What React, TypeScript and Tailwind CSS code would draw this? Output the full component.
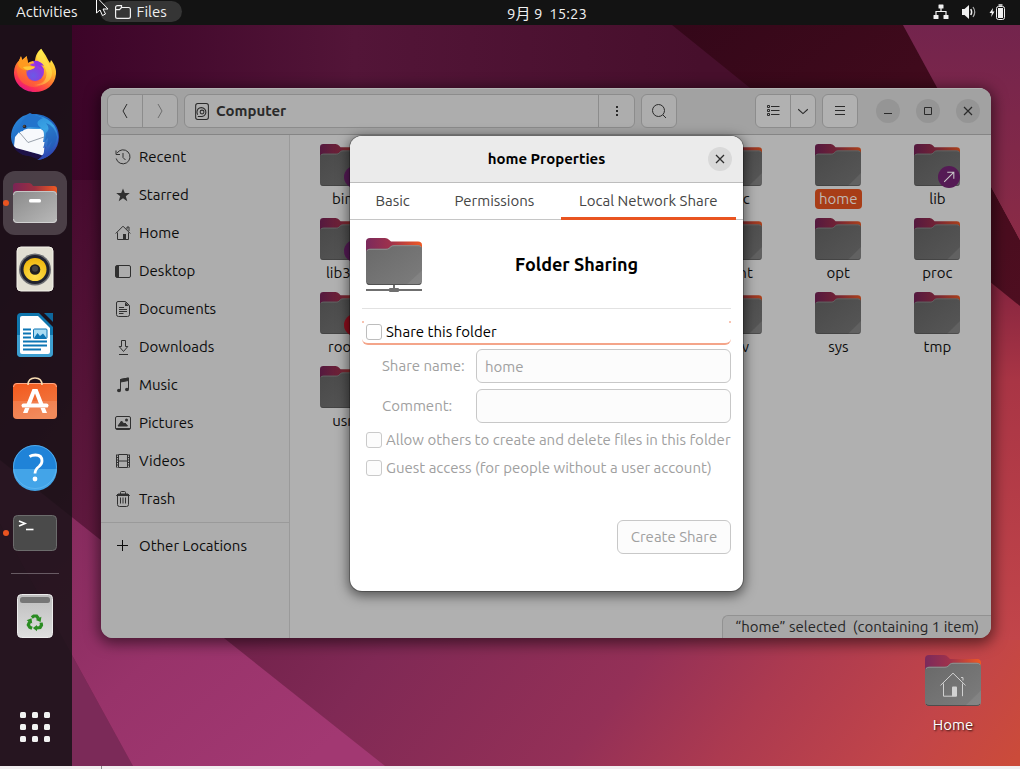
import type { ReactNode } from "react";

type IconProps = { children: ReactNode; className?: string };

function Symbolic({ children, className = "size-4" }: IconProps) {
  return (
    <svg viewBox="0 0 16 16" className={className} fill="none" stroke="currentColor" aria-hidden="true">
      {children}
    </svg>
  );
}

function Wallpaper() {
  return (
    <svg
      className="absolute inset-0 h-full w-full"
      viewBox="0 0 1020 766"
      preserveAspectRatio="none"
      aria-hidden="true"
    >
      <defs>
        <linearGradient id="wp-base" gradientUnits="userSpaceOnUse" x1="60" y1="60" x2="1000" y2="780">
          <stop offset="0" stopColor="#3c0428" />
          <stop offset="0.2" stopColor="#581539" />
          <stop offset="0.52" stopColor="#802955" />
          <stop offset="0.7" stopColor="#943057" />
          <stop offset="0.8" stopColor="#ac3a50" />
          <stop offset="0.92" stopColor="#c24549" />
          <stop offset="1" stopColor="#cb4b3a" />
        </linearGradient>
        <linearGradient id="wp-top" gradientUnits="userSpaceOnUse" x1="72" y1="0" x2="700" y2="0">
          <stop offset="0" stopColor="#3c0428" />
          <stop offset="0.45" stopColor="#531538" />
          <stop offset="1" stopColor="#470f2c" />
        </linearGradient>
        <linearGradient id="wp-ray" gradientUnits="userSpaceOnUse" x1="60" y1="500" x2="300" y2="769">
          <stop offset="0" stopColor="#842a5c" />
          <stop offset="0.5" stopColor="#98336a" />
          <stop offset="1" stopColor="#a23872" />
        </linearGradient>
        <linearGradient id="wp-light" x1="0" y1="0" x2="0" y2="1">
          <stop offset="0" stopColor="#73244d" />
          <stop offset="1" stopColor="#8a2b46" />
        </linearGradient>
        <linearGradient id="wp-dark" x1="0" y1="0" x2="1" y2="1">
          <stop offset="0" stopColor="#340719" />
          <stop offset="1" stopColor="#4e0e20" />
        </linearGradient>
        <linearGradient id="wp-right" x1="0" y1="0" x2="0" y2="1">
          <stop offset="0" stopColor="#82233f" />
          <stop offset="0.3" stopColor="#a93545" />
          <stop offset="1" stopColor="#c2454a" />
        </linearGradient>
      </defs>
      <rect width="1020" height="766" fill="url(#wp-base)" />
      <path d="M72 0H1020V180H72Z" fill="url(#wp-top)" />
      <path d="M980 270L1020 302V640H980Z" fill="url(#wp-right)" />
      <path d="M672 25H903L1020 240V306Z" fill="url(#wp-dark)" />
      <path d="M903 25H1020V240Z" fill="url(#wp-light)" />
      <path d="M0 524L133 766H0Z" fill="#7b2a58" />
      <path d="M0 460L385 766H133L0 524Z" fill="url(#wp-ray)" />
    </svg>
  );
}

function Folder({
  id,
  dim = false,
  className,
  children,
}: {
  id: string;
  dim?: boolean;
  className: string;
  children?: ReactNode;
}) {
  return (
    <svg viewBox="0 0 56 52" preserveAspectRatio="none" className={className} aria-hidden="true">
      <defs>
        <linearGradient id={`${id}-back`} x1="0" y1="0" x2="1" y2="0">
          <stop offset="0" stopColor={dim ? "#54193f" : "#7a2a5c"} />
          <stop offset="0.45" stopColor={dim ? "#702236" : "#a0324b"} />
          <stop offset="1" stopColor={dim ? "#ab411b" : "#f05a24"} />
        </linearGradient>
        <linearGradient id={`${id}-front`} x1="0" y1="0" x2="1" y2="1">
          <stop offset="0" stopColor={dim ? "#494949" : "#696969"} />
          <stop offset="1" stopColor={dim ? "#575757" : "#7d7d7d"} />
        </linearGradient>
      </defs>
      <path
        d="M0 16V4Q0 0 4 0H19Q21.500 0 23 2L25 4H52Q56 4 56 8V20H0Z"
        fill={`url(#${id}-back)`}
      />
      <path
        d="M0 16Q0 12 4 12H20Q22 12 23 11L25 9Q26 8 28 8H52Q56 8 56 12V48Q56 52 52 52H4Q0 52 0 48Z"
        fill={`url(#${id}-front)`}
      />
      <path
        d="M1 14Q2 12.500 4 12.500H20Q22 12.500 23 11.500L25 9.500Q26 8.500 28 8.500H52Q54 8.500 55 10"
        fill="none"
        stroke={dim ? "#686868" : "#909090"}
        strokeWidth="1"
      />
      <path d="M56 36V48Q56 52 52 52H40Z" fill="#fff" opacity="0.07" />
      <path d="M1 50Q2 51.500 4 51.500H52Q54 51.500 55 50" fill="none" stroke="#333" strokeOpacity="0.6" />
      {children}
    </svg>
  );
}

function FirefoxIcon() {
  return (
    <svg viewBox="0 0 48 48" className="size-12" aria-hidden="true">
      <defs>
        <linearGradient id="ff-body" x1="0.8" y1="0.1" x2="0.3" y2="1">
          <stop offset="0" stopColor="#fff04a" />
          <stop offset="0.35" stopColor="#ffb52c" />
          <stop offset="0.6" stopColor="#ff6b32" />
          <stop offset="0.85" stopColor="#fb2f55" />
          <stop offset="1" stopColor="#e2158a" />
        </linearGradient>
        <radialGradient id="ff-globe" cx="0.4" cy="0.7" r="0.8">
          <stop offset="0" stopColor="#6a5ae6" />
          <stop offset="0.6" stopColor="#8a3fdf" />
          <stop offset="1" stopColor="#c02be0" />
        </radialGradient>
        <linearGradient id="ff-head" x1="0" y1="0" x2="0.6" y2="1">
          <stop offset="0" stopColor="#ff8a1f" />
          <stop offset="1" stopColor="#ff7a2b" />
        </linearGradient>
      </defs>
      <path
        d="M30.300 1.700C32 5 34.500 7.500 36 11C37 13 38 14.500 39 16L40 13C44 18 45.500 23 45 27C44 38 35 45 24 45C12 45 3 36.500 3 25.500C3 20 5 16 8 13.500L10 9L11 13L15.700 9L17 16C19 14.500 21 14 24 14C24.500 9 26 5 30.300 1.700Z"
        fill="url(#ff-body)"
      />
      <path d="M30 2C26 6 25 11 27 14C31 17 35 20 35.500 26C36 33 30 38 23 38C31 40 41 35 41 26C41 18 32 12 30 2Z" fill="#fff15a" opacity="0.45" />
      <circle cx="24" cy="25" r="9" fill="url(#ff-globe)" />
      <path d="M22 14C26 13 31 15 33 19L30 18C32 20 33 22 33 24C31 21 28 19 25 19Z" fill="#8e34e4" />
      <path
        d="M8 14L10 11L11.500 14L17 16.500C19 19 22 19 24 19.700C23 22 20 22.500 18 23C16 24 15.500 26 16 28C16.500 32 20 35 25 35C30 35 34 31.500 35 28C35 36 28 41 22 40C13 39 7 33 6 25C5.500 21 6.500 17 8 14Z"
        fill="url(#ff-head)"
        opacity="0.45"
      />
      <path d="M7 16L10 9.500L11.500 13.500L15.700 9.500L17 16.500C19 19 22 19 24 19.700C23 22 20 22.500 18 23C12 24 7 21 7 16Z" fill="#ff9a20" />
      <path d="M12 20C16 19 20 19 24 19.700C23 22 19 22.500 17 23C15 23 13 22 12 20Z" fill="#ffc83a" />
    </svg>
  );
}

function ThunderbirdIcon() {
  return (
    <svg viewBox="0 0 48 48" className="size-12" aria-hidden="true">
      <defs>
        <linearGradient id="tb-body" x1="0" y1="0" x2="1" y2="1">
          <stop offset="0" stopColor="#2f8fe0" />
          <stop offset="0.45" stopColor="#1c62bd" />
          <stop offset="1" stopColor="#3a35a5" />
        </linearGradient>
        <linearGradient id="tb-wing" x1="0" y1="0" x2="0.4" y2="1">
          <stop offset="0" stopColor="#2a86d8" />
          <stop offset="0.5" stopColor="#3aa4e4" />
          <stop offset="1" stopColor="#2d4cb5" />
        </linearGradient>
      </defs>
      <path
        d="M15 2L19 0L21 1C35 0 48 9 48 24C48 36 39 45 27 47L32 43L13 42C5 38 0 31 0 24C0 15 5 7 12 3Z"
        fill="url(#tb-body)"
      />
      <path d="M2 33L33 43L26 46Q20 43 12 42Q5 39 2 33Z" fill="#1d1147" />
      <path d="M3 33L4 24L9 18L17 15.500L30 16Q34 18 34 22L33 41Q31 43 29 41.500L5 35Z" fill="#f7f9fc" />
      <path d="M9 20L17 29.500L33 24" fill="none" stroke="#8f97a3" strokeWidth="0.900" />
      <path
        d="M20 2C34 2 46 10 47 23C48 35 39 46 26 47C31 44 33 41 33 38L35 34L32 35L34 29L32 29L33 23Q33 16 30 16L13 15Q10 17 8 21C8 14 14 4 20 2Z"
        fill="url(#tb-wing)"
      />
      <path d="M20 1C13 3 8 12 8 20Q9 18 12 18Q14 14 19 14L30 15Q22 9 32 5Q25 2 20 1Z" fill="#2374cc" />
      <path d="M35 20L34 28L37 25L36 34L41 28L37 39Q45 33 46 24Q44 13 35 10Q40 16 35 20Z" fill="#1f5fb8" opacity="0.65" />
      <circle cx="13.500" cy="13.500" r="1.800" fill="#232130" />
      <circle cx="13" cy="13" r="0.600" fill="#f4bf4b" />
    </svg>
  );
}

function FilesIcon() {
  return (
    <svg viewBox="0 0 48 48" className="size-12" aria-hidden="true">
      <defs>
        <linearGradient id="fi-back" x1="0" y1="0" x2="1" y2="0">
          <stop offset="0" stopColor="#7a2455" />
          <stop offset="0.5" stopColor="#9c3040" />
          <stop offset="1" stopColor="#f05a22" />
        </linearGradient>
        <linearGradient id="fi-front" x1="0" y1="0" x2="1" y2="1">
          <stop offset="0" stopColor="#8a8a8a" />
          <stop offset="1" stopColor="#b9b9b9" />
        </linearGradient>
      </defs>
      <path d="M2 16V7Q2 4 5 4H18Q20 4 21 5.500L22 7H43Q46 7 46 10V16Z" fill="url(#fi-back)" />
      <rect x="2" y="12" width="44" height="32" rx="4" fill="url(#fi-front)" />
      <path d="M2.500 16Q2.500 12.500 6 12.500H42Q45.500 12.500 45.500 16" fill="none" stroke="#c6c6c6" />
      <path d="M2.500 40Q2.500 43.500 6 43.500H42Q45.500 43.500 45.500 40" fill="none" stroke="#d2d2d2" />
      <rect x="18" y="20" width="12" height="3.500" rx="1.500" fill="#fff" />
    </svg>
  );
}

function RhythmboxIcon() {
  return (
    <svg viewBox="0 0 48 48" className="size-12" aria-hidden="true">
      <defs>
        <radialGradient id="rb-cone" cx="0.5" cy="0.8" r="0.8">
          <stop offset="0" stopColor="#ffe14f" />
          <stop offset="1" stopColor="#eeb50b" />
        </radialGradient>
      </defs>
      <rect x="6" y="2" width="36" height="44" rx="4" fill="#e2dfd3" stroke="#f4f2ea" />
      <circle cx="24" cy="24.500" r="16" fill="#6d6e72" />
      <circle cx="24" cy="24.500" r="14.500" fill="#20222f" />
      <circle cx="24" cy="24.500" r="11.500" fill="url(#rb-cone)" />
      <circle cx="24" cy="24.500" r="5.300" fill="#202020" />
      <circle cx="24" cy="23.800" r="3" fill="#444" />
    </svg>
  );
}

function WriterIcon() {
  return (
    <svg viewBox="0 0 48 48" className="size-12" aria-hidden="true">
      <path d="M10 2H28L42 16V42Q42 46 38 46H10Q6 46 6 42V6Q6 2 10 2Z" fill="#0f76ad" />
      <path d="M6 24H42V42Q42 46 38 46H10Q6 46 6 42Z" fill="#3d9fd0" />
      <path d="M33 2H42V11Z" fill="#0e679c" />
      <path d="M11 5H27L39 17V41Q39 43 37 43H11Q9 43 9 41V7Q9 5 11 5Z" fill="#fff" />
      <path d="M12 18.500H20M12 22.500H20M12 26.500H20M12 30.500H36M12 34.500H36M12 38.500H30" stroke="#0c75b4" strokeWidth="2" />
      <rect x="22.500" y="18" width="13.500" height="9.500" rx="1" fill="#aadcf3" stroke="#0c75b4" />
      <path d="M23 27L26.500 22L29 25L32 22.500L35.500 27Z" fill="#0c75b4" />
    </svg>
  );
}

function SoftwareIcon() {
  return (
    <svg viewBox="0 0 48 48" className="size-12" aria-hidden="true">
      <defs>
        <linearGradient id="sw-bag" x1="0" y1="0" x2="0.4" y2="1">
          <stop offset="0" stopColor="#f4591c" />
          <stop offset="1" stopColor="#ef7a45" />
        </linearGradient>
      </defs>
      <rect x="2" y="6" width="44" height="36" rx="4" fill="url(#sw-bag)" />
      <path d="M2 24H46V38Q46 42 42 42H6Q2 42 2 38Z" fill="#fff" opacity="0.12" />
      <path d="M2.500 10Q2.500 6.500 6 6.500H42Q45.500 6.500 45.500 10" fill="none" stroke="#ffa884" />
      <path d="M17 8Q17 1 24 1Q31 1 31 8" fill="none" stroke="#f8ddb2" strokeWidth="1.600" />
      <path d="M21.500 12H26.500L36 36H31.500L24 16.500L16.500 36H12Z" fill="#fff" />
      <path d="M12.500 28.500H35.500" stroke="#fff" strokeWidth="4" strokeLinecap="round" />
      <path d="M11 30.500H37" stroke="#f7bda1" strokeWidth="0.800" />
    </svg>
  );
}

function HelpIcon() {
  return (
    <svg viewBox="0 0 48 48" className="size-12" aria-hidden="true">
      <circle cx="24" cy="24" r="22" fill="#1f83d8" />
      <path d="M2 26H46A22 22 0 0 1 2 26Z" fill="#43a4e8" />
      <circle cx="24" cy="24" r="21.500" fill="none" stroke="#65bbf2" strokeOpacity="0.7" />
      <path
        d="M18.500 13.500Q21 12 24.500 12Q31 12 31 18Q31 21 28 23.500Q24 26.500 24 30.500"
        fill="none"
        stroke="#fff"
        strokeWidth="2.800"
      />
      <circle cx="24" cy="36" r="2.400" fill="#fff" />
    </svg>
  );
}

function TerminalIcon() {
  return (
    <svg viewBox="0 0 48 48" className="size-12" aria-hidden="true">
      <rect x="2.500" y="6.500" width="43" height="35" rx="4" fill="#4a4a4a" stroke="#6c6c6c" />
      <path d="M8 12L14 14.500L8 17" fill="none" stroke="#fff" strokeWidth="1.600" />
      <path d="M15 20.500H22.500" stroke="#fff" strokeWidth="1.600" />
    </svg>
  );
}

function TrashBinIcon() {
  const arrow = (
    <>
      <path d="M20 21.500L22.500 19.500H26L28.500 23" fill="none" stroke="#2a8c22" strokeWidth="4" />
      <path d="M32 20.500L31 27L25 24.500Z" fill="#2a8c22" />
    </>
  );
  return (
    <svg viewBox="0 0 48 48" className="size-12" aria-hidden="true">
      <defs>
        <linearGradient id="tr-bin" x1="0" y1="0" x2="0" y2="1">
          <stop offset="0" stopColor="#bdbdbd" />
          <stop offset="1" stopColor="#dedede" />
        </linearGradient>
      </defs>
      <rect x="6.500" y="2.500" width="35" height="43" rx="4" fill="url(#tr-bin)" stroke="#ececec" />
      <rect x="9" y="5" width="30" height="6" rx="2.500" fill="#767676" />
      <g transform="translate(4.800 8.400) scale(0.800)">
        <g>{arrow}</g>
        <g transform="rotate(120 24 28)">{arrow}</g>
        <g transform="rotate(240 24 28)">{arrow}</g>
      </g>
    </svg>
  );
}

function AppsGridIcon() {
  return (
    <svg viewBox="0 0 48 48" className="size-12" fill="#f2f2f2" aria-hidden="true">
      {[9, 21, 33].map((y) =>
        [9, 21, 33].map((x) => <rect key={`${x}-${y}`} x={x} y={y} width="6" height="6" rx="1.500" />)
      )}
    </svg>
  );
}

function TopBar() {
  return (
    <header className="relative z-10 grid h-[25px] grid-cols-[1fr_auto_1fr] items-center bg-[#131313] text-[15px] leading-5 text-[#f0f0f0]">
      <div className="flex items-center gap-[22px] pb-0.5 pl-4">
        <button type="button">Activities</button>
        <button type="button" className="flex h-[21px] items-center gap-1.5 rounded-full bg-[#353535] px-[15px]">
          <svg viewBox="0 0 16 16" className="size-4" fill="none" stroke="currentColor" strokeWidth="1.200" aria-hidden="true">
            <path d="M0.600 12.500V3.500Q0.600 1.600 2.500 1.600H6.500V3.500H13.500Q15.400 3.500 15.400 5.400V12.500Q15.400 14.400 13.500 14.400H2.500Q0.600 14.400 0.600 12.500ZM0.600 5.600H4.500L6.500 3.500" />
          </svg>
          Files
        </button>
      </div>
      <time className="ml-[74px] pt-0.5 whitespace-pre">9月 9  15:23</time>
      <div className="flex items-center justify-end gap-3 pr-[15px] pb-0.5">
        <Symbolic>
          <rect x="5.500" y="0.500" width="5" height="4" rx="0.500" fill="currentColor" stroke="none" />
          <rect x="0.500" y="11" width="5" height="4" rx="0.500" fill="currentColor" stroke="none" />
          <rect x="10.500" y="11" width="5" height="4" rx="0.500" fill="currentColor" stroke="none" />
          <path d="M8 4V7.500M3 11V7.500H13V11" strokeWidth="1.200" />
        </Symbolic>
        <Symbolic>
          <path d="M1 5H3.500L8 1V15L3.500 11H1Z" fill="currentColor" stroke="none" />
          <path d="M9.800 5Q11.500 8 9.800 11" strokeWidth="1.500" />
          <path d="M12 3Q15.500 8 12 13" strokeWidth="1.200" opacity="0.7" />
        </Symbolic>
        <Symbolic>
          <path d="M4 4L0.500 9H2.800L2.200 13L5.500 7.500H3.500Z" fill="currentColor" stroke="none" />
          <rect x="7.500" y="2.500" width="8" height="13" rx="2" />
          <rect x="9" y="4" width="5" height="10" fill="currentColor" stroke="none" />
          <path d="M9.500 1H13.500" strokeWidth="1.500" />
        </Symbolic>
      </div>
      <svg viewBox="0 0 13 18" className="absolute -top-px left-24 h-[18px] w-[13px]" aria-hidden="true">
        <path d="M0.500 -1V14L4 11L6.500 16.500L9.500 15L7 10H12L1.500 -1Z" fill="#1a1a1a" stroke="#fff" />
      </svg>
    </header>
  );
}

function DockItem({
  label,
  running = false,
  active = false,
  children,
}: {
  label: string;
  running?: boolean;
  active?: boolean;
  children: ReactNode;
}) {
  return (
    <button
      type="button"
      aria-label={label}
      className={`relative flex size-16 shrink-0 items-center justify-center rounded-xl ${active ? "bg-white/20" : ""}`}
    >
      {running && <span className="absolute top-[29px] left-0 size-1.5 rounded-full bg-[#e95420]" />}
      {children}
    </button>
  );
}

function Dock() {
  return (
    <nav aria-label="Dock" className="flex w-[72px] shrink-0 flex-col gap-0.5 bg-[#171216]/85 pt-3.5 pb-[7px] pl-[3px]">
      <DockItem label="Firefox"><FirefoxIcon /></DockItem>
      <DockItem label="Thunderbird"><ThunderbirdIcon /></DockItem>
      <DockItem label="Files" running active><FilesIcon /></DockItem>
      <DockItem label="Rhythmbox"><RhythmboxIcon /></DockItem>
      <DockItem label="LibreOffice Writer"><WriterIcon /></DockItem>
      <DockItem label="Software"><SoftwareIcon /></DockItem>
      <DockItem label="Help"><HelpIcon /></DockItem>
      <DockItem label="Terminal" running><TerminalIcon /></DockItem>
      <div className="mt-1.5 mr-[13px] mb-2 ml-2 border-t border-white/30" />
      <DockItem label="Trash"><TrashBinIcon /></DockItem>
      <div className="mt-auto">
        <DockItem label="Show Applications"><AppsGridIcon /></DockItem>
      </div>
    </nav>
  );
}

const places: { name: string; icon: ReactNode }[] = [
  {
    name: "Recent",
    icon: (
      <Symbolic>
        <path d="M2 4.200A7 7 0 1 1 1.200 9.500M8 4V8.500L10.500 11" />
        <path d="M1 1.500V5.500H5" />
      </Symbolic>
    ),
  },
  {
    name: "Starred",
    icon: (
      <Symbolic>
        <path d="M8 1.500L9.800 6H14.800L10.800 9.200L12.300 14.200L8 11.200L3.700 14.200L5.200 9.200L1.200 6H6.200Z" fill="currentColor" stroke="none" />
      </Symbolic>
    ),
  },
  {
    name: "Home",
    icon: (
      <Symbolic>
        <path d="M0.700 8.500L8 1.200L15.300 8.500M2.500 7.500V14.500H13.500V7.500M12 4.500V2H14V6" />
        <rect x="8" y="9" width="3" height="5.500" fill="currentColor" stroke="none" />
      </Symbolic>
    ),
  },
  {
    name: "Desktop",
    icon: (
      <Symbolic>
        <rect x="0.500" y="2.500" width="15" height="12" rx="1.500" />
        <path d="M1 3H4V14H1Z" fill="currentColor" stroke="none" />
      </Symbolic>
    ),
  },
  {
    name: "Documents",
    icon: (
      <Symbolic>
        <path d="M3 0.500H10.500L14.500 4.500V13.500Q14.500 15.500 12.500 15.500H3.500Q1.500 15.500 1.500 13.500V2Q1.500 0.500 3 0.500Z" />
        <path d="M10 1V5H14Z" fill="currentColor" stroke="none" />
        <path d="M4 6.500H9M4 8.500H12M4 10.500H12M4 12.500H8.500" />
      </Symbolic>
    ),
  },
  {
    name: "Downloads",
    icon: (
      <Symbolic>
        <path d="M6.500 1.500H10.500V7.500H12.800L8.500 12.500L4.200 7.500H6.500ZM4 15.500H13" />
      </Symbolic>
    ),
  },
  {
    name: "Music",
    icon: (
      <Symbolic>
        <path d="M5.500 13V2.500L13.500 1V12" />
        <path d="M5.500 2.500L13.500 1V3.500L5.500 5Z" fill="currentColor" />
        <ellipse cx="4" cy="13.500" rx="2" ry="1.800" fill="currentColor" stroke="none" />
        <ellipse cx="12" cy="12.500" rx="2" ry="1.800" fill="currentColor" stroke="none" />
      </Symbolic>
    ),
  },
  {
    name: "Pictures",
    icon: (
      <Symbolic>
        <rect x="0.500" y="1.500" width="15" height="13" rx="1.500" />
        <path d="M1 13.500H15M3 11L6.500 6L9 9L10 8L12.500 11Z" fill="currentColor" />
        <circle cx="11.500" cy="5" r="1.500" fill="currentColor" stroke="none" />
      </Symbolic>
    ),
  },
  {
    name: "Videos",
    icon: (
      <Symbolic>
        <path d="M3.500 1.500H12.500V14.500H3.500ZM3.500 8H12.500" />
        <path d="M1.500 1.500V14.500M14.500 1.500V14.500" />
        <path d="M2.500 1.500V14.500M13.500 1.500V14.500" strokeDasharray="1 1.500" />
      </Symbolic>
    ),
  },
  {
    name: "Trash",
    icon: (
      <Symbolic>
        <path d="M1.500 4.500H14.500L13 3H3Z" fill="currentColor" />
        <path d="M5.500 3V1.500Q5.500 0.500 6.500 0.500H9.500Q10.500 0.500 10.500 1.500V3M2.500 5V13.500Q2.500 15.500 4.500 15.500H11.500Q13.500 15.500 13.500 13.500V5M5.500 6.500V12.500M8 6.500V12.500M10.500 6.500V12.500" />
      </Symbolic>
    ),
  },
];

function Sidebar() {
  return (
    <aside className="w-[189px] shrink-0 border-r border-[#9a9a9a] bg-[#adadad] pt-[3px]">
      <ul>
        {places.map((place) => (
          <li key={place.name}>
            <a href={`#${place.name.toLowerCase()}`} className="flex h-[38px] items-center gap-2 pl-3.5">
              <span className="text-[#303030]">{place.icon}</span>
              {place.name}
            </a>
          </li>
        ))}
      </ul>
      <div className="mt-1 border-t border-[#9a9a9a] pt-1">
        <a href="#other-locations" className="flex h-[38px] items-center gap-2 pl-3.5">
          <Symbolic>
            <path d="M7.500 2V13M2 7.500H13" />
          </Symbolic>
          Other Locations
        </a>
      </div>
    </aside>
  );
}

type Entry = { name: string; cell: string; emblem?: "link" | "denied"; selected?: boolean };

const entries: Entry[] = [
  { name: "bin", cell: "col-start-1 row-start-1", emblem: "link" },
  { name: "etc", cell: "col-start-5 row-start-1" },
  { name: "home", cell: "col-start-6 row-start-1", selected: true },
  { name: "lib", cell: "col-start-7 row-start-1", emblem: "link" },
  { name: "lib32", cell: "col-start-1 row-start-2", emblem: "link" },
  { name: "mnt", cell: "col-start-5 row-start-2" },
  { name: "opt", cell: "col-start-6 row-start-2" },
  { name: "proc", cell: "col-start-7 row-start-2" },
  { name: "root", cell: "col-start-1 row-start-3", emblem: "denied" },
  { name: "srv", cell: "col-start-5 row-start-3" },
  { name: "sys", cell: "col-start-6 row-start-3" },
  { name: "tmp", cell: "col-start-7 row-start-3" },
  { name: "usr", cell: "col-start-1 row-start-4" },
];

function FolderEntry({ entry }: { entry: Entry }) {
  return (
    <button type="button" className={`flex flex-col items-center gap-[3px] ${entry.cell}`}>
      <span className="relative">
        <Folder id={`dir-${entry.name}`} dim className="h-[42px] w-[46px]" />
        {entry.emblem && (
          <span
            className={`absolute right-0 -bottom-0.5 flex size-[22px] items-center justify-center rounded-full text-[#c8c8c8] ${
              entry.emblem === "link" ? "bg-[#551a55]" : "bg-[#8c0d1c]"
            }`}
          >
            <Symbolic className="size-3.5">
              {entry.emblem === "link" ? (
                <path d="M2.500 13.500L13 3M6 2.500H13.500V10" strokeWidth="1.200" />
              ) : (
                <path d="M3 3L13 13M13 3L3 13" strokeWidth="1.500" />
              )}
            </Symbolic>
          </span>
        )}
      </span>
      <span
        className={`h-5 rounded px-1 leading-5 ${entry.selected ? "bg-[#a83d17] text-[#c0b8b4]" : ""}`}
      >
        {entry.name}
      </span>
    </button>
  );
}

function WindowButton({ label, children }: { label: string; children: ReactNode }) {
  return (
    <button type="button" aria-label={label} className="flex size-6 items-center justify-center rounded-full bg-[#959595]">
      <Symbolic>{children}</Symbolic>
    </button>
  );
}

function FilesWindow() {
  return (
    <section
      aria-label="Files"
      className="absolute inset-x-[29px] top-[63px] flex h-[550px] flex-col overflow-hidden rounded-xl bg-[#b0b0b0] text-[15px] leading-5 text-[#0c0c0c] shadow-[0_3px_14px_3px_rgba(0,0,0,0.5)]"
    >
      <div className="flex h-[47px] shrink-0 items-center border-b border-[#858585] bg-[#a2a2a2] px-1.5 text-[#2a2a2a] shadow-[inset_0_1px_0_#b3b3b3]">
        <div className="flex h-[34px] w-[71px] divide-x divide-[#8c8c8c] rounded-md border border-[#8c8c8c] bg-[#adadad]">
          <button type="button" aria-label="Back" className="flex flex-1 items-center justify-center">
            <Symbolic><path d="M10 1L6 8L10 15" /></Symbolic>
          </button>
          <button type="button" aria-label="Forward" className="flex flex-1 items-center justify-center text-[#6d6d6d]">
            <Symbolic><path d="M6 1L10 8L6 15" /></Symbolic>
          </button>
        </div>
        <div className="ml-1.5 flex h-[34px] min-w-0 flex-[0_1_451px] divide-x divide-[#8c8c8c] rounded-md border border-[#8c8c8c] bg-[#adadad]">
          <button type="button" className="flex flex-1 items-center gap-1.5 pl-2 font-bold">
            <Symbolic className="size-[17px]">
              <rect x="2.500" y="0.500" width="12" height="15" rx="2" />
              <path d="M4.500 11A4.200 4.200 0 1 1 8.500 12.700H4.500" />
              <circle cx="8.500" cy="8.500" r="1.800" />
            </Symbolic>
            Computer
          </button>
          <button type="button" aria-label="Location menu" className="flex w-[35px] items-center justify-center">
            <Symbolic><path d="M8 3V5M8 7V9M8 11V13" strokeWidth="2" /></Symbolic>
          </button>
        </div>
        <button type="button" aria-label="Search" className="ml-1.5 flex h-[34px] w-9 items-center justify-center rounded-md border border-[#8c8c8c] bg-[#adadad]">
          <Symbolic><circle cx="7.500" cy="7.500" r="6" /><path d="M12 12L15 15" /></Symbolic>
        </button>
        <div className="ml-auto flex h-[34px] w-[61px] divide-x divide-[#8c8c8c] rounded-md border border-[#8c8c8c] bg-[#b1b1b1]">
          <button type="button" aria-label="List view" className="flex w-[35px] items-center justify-center">
            <Symbolic>
              <path d="M6 3.500H14.500M6 7.500H14.500M6 11.500H14.500" />
              <path d="M2.500 2.500H4.500V4.500H2.500ZM2.500 6.500H4.500V8.500H2.500ZM2.500 10.500H4.500V12.500H2.500Z" />
            </Symbolic>
          </button>
          <button type="button" aria-label="View options" className="flex flex-1 items-center justify-center">
            <Symbolic className="size-3.5"><path d="M2.500 6L8 11L13.500 6" strokeWidth="1.200" /></Symbolic>
          </button>
        </div>
        <button type="button" aria-label="Menu" className="ml-1.5 flex h-[34px] w-9 items-center justify-center rounded-md border border-[#8c8c8c] bg-[#b1b1b1]">
          <Symbolic><path d="M3 3.500H13M3 7.500H13M3 11.500H13" /></Symbolic>
        </button>
        <div className="ml-[18px] flex gap-4 pr-[5px]">
          <WindowButton label="Minimize"><path d="M4 10.500H12" /></WindowButton>
          <WindowButton label="Maximize"><path d="M4.500 4.500H11.500V11.500H4.500Z" /></WindowButton>
          <WindowButton label="Close"><path d="M4 4L12 12M12 4L4 12" strokeWidth="1.200" /></WindowButton>
        </div>
      </div>
      <div className="flex min-h-0 flex-1">
        <Sidebar />
        <main className="flex min-w-0 flex-1 flex-col">
          <div className="grid auto-rows-[65px] grid-cols-7 gap-y-[9px] pt-[9px] pr-1 pl-[3px]">
            {entries.map((entry) => (
              <FolderEntry key={entry.name} entry={entry} />
            ))}
          </div>
          <p className="mt-auto h-[23px] self-end rounded-tl-md border-t border-l border-[#929292] bg-[#a8a8a8] px-3 leading-[22px] whitespace-pre text-[#262626]">
            “home” selected  (containing 1 item)
          </p>
        </main>
      </div>
    </section>
  );
}

function TextField({ id, label, value }: { id: string; label: string; value: string }) {
  return (
    <div className="flex items-center pl-5">
      <label htmlFor={id} className="w-[94px] shrink-0">{label}</label>
      <input
        id={id}
        type="text"
        disabled
        defaultValue={value}
        className="h-[34px] min-w-0 flex-1 rounded-md border border-[#c8c8c8] bg-[#fcfcfc] px-2"
      />
    </div>
  );
}

function PropertiesDialog() {
  return (
    <section
      role="dialog"
      aria-labelledby="dialog-title"
      className="absolute top-[111px] left-[278px] flex h-[455px] w-[393px] flex-col overflow-hidden rounded-xl bg-white text-[15px] leading-5 text-[#a0a0a0] shadow-[0_3px_12px_2px_rgba(0,0,0,0.5),0_0_0_1px_rgba(0,0,0,0.25)]"
    >
      <div className="grid h-[47px] grid-cols-[1fr_auto_1fr] items-center border-b border-[#bdbdbd] bg-[#ebebeb] pr-[11px] pl-[11px] text-black">
        <h1 id="dialog-title" className="col-start-2 font-bold">home Properties</h1>
        <button type="button" aria-label="Close" className="flex size-6 items-center justify-center justify-self-end rounded-full bg-[#d9d9d9] text-[#2e2e2e]">
          <Symbolic><path d="M4 4L12 12M12 4L4 12" strokeWidth="1.300" /></Symbolic>
        </button>
      </div>
      <div role="tablist" className="flex h-[37px] shrink-0 gap-2 border-b border-[#c6c6c6] px-[7px] text-[#454545]">
        <button type="button" role="tab" aria-selected="false" className="flex-auto px-4">Basic</button>
        <button type="button" role="tab" aria-selected="false" className="flex-auto px-4">Permissions</button>
        <button type="button" role="tab" aria-selected="true" className="-mb-px flex-auto border-b-[3px] border-[#e95420] px-4 pt-0.5">
          Local Network Share
        </button>
      </div>
      <form className="flex flex-1 flex-col px-3">
        <div className="flex h-[89px] items-center border-b border-[#e2e2e2] pt-0.5 pl-1">
          <svg viewBox="0 0 56 54" className="h-[54px] w-14" aria-hidden="true">
            <svg x="0" y="0" width="56" height="47">
              <Folder id="share" className="h-[47px] w-14" />
            </svg>
            <path d="M0 52H56M28 47V52" stroke="#6f6f6f" strokeWidth="2" />
            <rect x="23" y="50" width="10" height="4" rx="1" fill="#6f6f6f" />
          </svg>
          <h2 className="flex-1 pb-0.5 text-center text-lg font-bold text-black">Folder Sharing</h2>
        </div>
        <label className="relative mt-3 flex h-6 items-center gap-1 rounded-md border-b-2 border-[#f4a58a] pl-1 text-black">
          <span className="absolute top-0 left-0 size-0.5 bg-[#f8c4b2]" />
          <span className="absolute top-0 right-0 size-0.5 bg-[#f8c4b2]" />
          <input type="checkbox" className="size-4 appearance-none rounded-[3px] border border-[#bdbdbd] bg-white" />
          Share this folder
        </label>
        <div className="mt-1 flex flex-col gap-1.5">
          <TextField id="share-name" label="Share name:" value="home" />
          <TextField id="share-comment" label="Comment:" value="" />
        </div>
        <div className="mt-[3px] flex flex-col whitespace-nowrap">
          <label className="flex h-7 items-center gap-1 pl-1">
            <input type="checkbox" disabled className="size-4 shrink-0 appearance-none rounded-[3px] border border-[#cacaca] bg-[#fcfcfc]" />
            Allow others to create and delete files in this folder
          </label>
          <label className="flex h-7 items-center gap-1 pl-1">
            <input type="checkbox" disabled className="size-4 shrink-0 appearance-none rounded-[3px] border border-[#cacaca] bg-[#fcfcfc]" />
            Guest access (for people without a user account)
          </label>
        </div>
        <button type="submit" disabled className="mt-auto mb-[37px] h-[34px] w-[114px] self-end rounded-md border border-[#c8c8c8] bg-[#fcfcfc]">
          Create Share
        </button>
      </form>
    </section>
  );
}

export default function App() {
  return (
    <div className="flex h-screen min-h-[769px] flex-col bg-[#f1eff0] font-['Ubuntu','Noto_Sans','Noto_Sans_CJK_SC',sans-serif]">
      <div className="relative flex min-h-0 flex-1 flex-col overflow-hidden">
        <Wallpaper />
        <TopBar />
        <div className="relative flex min-h-0 flex-1">
          <Dock />
          <div className="relative flex-1">
            <FilesWindow />
            <PropertiesDialog />
            <a
              href="#desktop-home"
              className="absolute right-[39px] bottom-[31px] flex w-14 flex-col items-center gap-[9px] text-[15px] leading-5 text-white [text-shadow:1px_1px_2px_rgba(0,0,0,0.8)]"
            >
              <Folder id="desk" className="h-[51px] w-14">
                <path
                  d="M15.500 31L28 18.500L40.500 31M18.500 29V42H31.500M37.500 29V42M36 23H38V26"
                  fill="none"
                  stroke="#d2d2d2"
                  strokeWidth="1"
                />
                <path d="M27 42V33Q27 32 28 32H31Q32 32 32 33V42Z" fill="#d2d2d2" />
              </Folder>
              Home
            </a>
          </div>
        </div>
      </div>
      <footer className="h-[3px] shrink-0">
        <div className="ml-[101px] h-full w-px bg-[#8f8f8f]" />
      </footer>
    </div>
  );
}
